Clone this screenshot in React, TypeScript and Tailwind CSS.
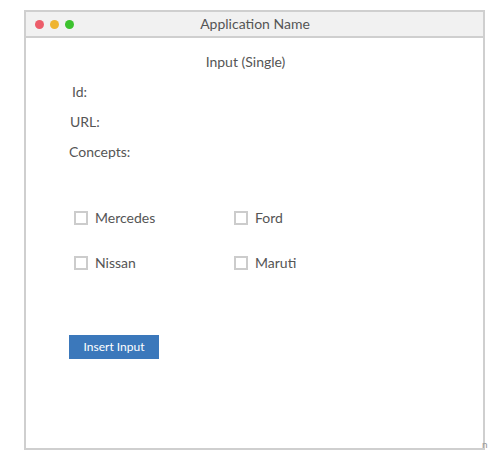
const font = { fontFamily: 'Lato, "Open Sans", sans-serif' };

function Check({ label }: { label: string }) {
  return (
    <label className="flex h-[18px] items-center gap-[7px] text-[14px] leading-[18px] text-[#555]">
      <span className="h-[14px] w-[14px] border-2 border-[#ccc] bg-white" />
      <span>{label}</span>
    </label>
  );
}

export default function App() {
  return (
    <div className="relative h-[460px] w-[494px] bg-white" style={font}>
      <div className="absolute left-[24px] top-[10px] h-[440px] w-[461px] border-2 border-[#cfcfcf] bg-white">
        <div className="relative flex h-[26px] items-center border-b-2 border-[#cfcfcf] bg-[#f1f1f1]">
          <div className="flex items-center gap-[6px] pl-[9px]">
            <span className="h-[9px] w-[9px] rounded-full bg-[#ec5d6a]" />
            <span className="h-[9px] w-[9px] rounded-full bg-[#efb430]" />
            <span className="h-[9px] w-[9px] rounded-full bg-[#3cc22e]" />
          </div>
          <div className="absolute inset-0 flex items-center justify-center pb-[1px] pl-[1px] text-[14px] text-[#555]">
            Application Name
          </div>
        </div>
        <div className="flex flex-col">
          <div className="mt-[15px] pr-[18px] text-center text-[14px] leading-[18px] text-[#555]">
            Input (Single)
          </div>
          <div className="mt-[12px] flex flex-col gap-[12px] pl-[43px] text-[14px] leading-[18px] text-[#555]">
            <span className="pl-[3px]">Id:</span>
            <span className="pl-[1px]">URL:</span>
            <span>Concepts:</span>
          </div>
          <div className="mt-[48px] grid w-[368px] grid-cols-2 gap-y-[27px] pl-[48px]">
            <Check label="Mercedes" />
            <Check label="Ford" />
            <Check label="Nissan" />
            <Check label="Maruti" />
          </div>
          <div className="mt-[63px] pl-[43px]">
            <button
              type="button"
              className="flex h-[24px] w-[90px] items-center justify-center bg-[#3b78bb] text-[12px] text-white"
            >
              Insert Input
            </button>
          </div>
        </div>
      </div>
      <span className="absolute left-[482px] top-[437px] text-[10px] text-[#999]">n</span>
    </div>
  );
}
